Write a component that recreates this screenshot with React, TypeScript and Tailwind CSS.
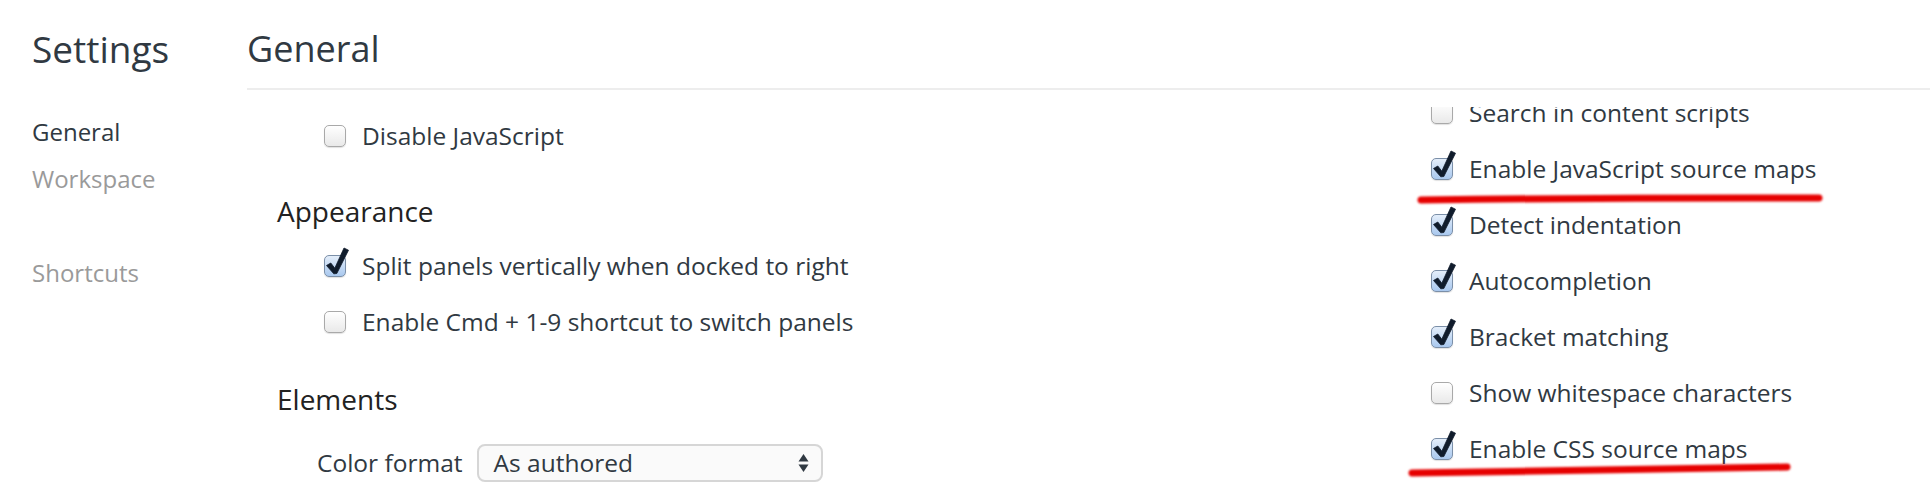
const leftSections = [
    {
        title: null as string | null,
        items: [{ label: "Disable JavaScript", checked: false }],
    },
    {
        title: "Appearance",
        items: [
            { label: "Split panels vertically when docked to right", checked: true },
            { label: "Enable Cmd + 1-9 shortcut to switch panels", checked: false },
        ],
    },
];

const sourcesItems = [
    { label: "Search in content scripts", checked: false },
    { label: "Enable JavaScript source maps", checked: true },
    { label: "Detect indentation", checked: true },
    { label: "Autocompletion", checked: true },
    { label: "Bracket matching", checked: true },
    { label: "Show whitespace characters", checked: false },
    { label: "Enable CSS source maps", checked: true },
];

function Checkbox({ checked }: { checked: boolean }) {
    if (!checked) {
        return (
            <span className="relative block h-[22px] w-[22px] shrink-0 rounded-[5px] border border-[#a9a9a9] bg-linear-to-b from-white to-[#e9e9e9] shadow-[0_1px_1px_rgba(0,0,0,0.12)]" />
        );
    }
    return (
        <span className="relative block h-[22px] w-[22px] shrink-0 rounded-[5px] border border-[#7b8fa8] bg-linear-to-b from-[#e4eefa] to-[#a9c8ee] shadow-[0_1px_1px_rgba(0,0,0,0.12)]">
            <svg
                className="absolute left-[-1px] top-[-1px] overflow-visible"
                width="22"
                height="22"
                viewBox="0 0 22 22"
            >
                <path
                    d="M2.5 10.5 L6.8 8 L10.8 13.2 L20 -7 L24.5 -4.8 L12.8 18.5 L9.8 18.8 Z"
                    fill="#101c2c"
                    strokeLinejoin="round"
                    stroke="#101c2c"
                    strokeWidth="0.8"
                />
            </svg>
        </span>
    );
}

function CheckRow({ label, checked }: { label: string; checked: boolean }) {
    return (
        <label className="flex h-[56px] items-center gap-4 pl-[77px] text-[24.5px] leading-[56px] whitespace-nowrap">
            <Checkbox checked={checked} />
            <span>{label}</span>
        </label>
    );
}

export default function App() {
    return (
        <div className="relative flex h-[498px] w-[1930px] overflow-hidden bg-white font-['Open_Sans',sans-serif] text-[#303942]">
            {/* Sidebar */}
            <aside className="w-[247px] shrink-0 pl-8">
                <h1 className="pt-[25px] text-[37px] leading-[48px]">Settings</h1>
                <nav className="mt-[35px] flex flex-col text-[24px] leading-[47px]">
                    <span>General</span>
                    <span className="text-[#9a9a9a]">Workspace</span>
                    <span className="h-[47px]" />
                    <span className="text-[#9a9a9a]">Shortcuts</span>
                </nav>
            </aside>

            {/* Main panel */}
            <main className="flex min-w-0 flex-1 flex-col">
                <header className="border-b-2 border-[#ededed] pt-[25px] pb-[15px]">
                    <h2 className="text-[36px] leading-[48px]">General</h2>
                </header>

                <div className="flex min-h-0 flex-1">
                    {/* Left column */}
                    <div className="w-[1107px] shrink-0 pt-[18px]">
                        {leftSections.map((section, i) => (
                            <section key={i} className={section.title ? "mt-[27px]" : ""}>
                                {section.title && (
                                    <h3 className="mb-[7px] pl-[30px] text-[28px] leading-[40px] text-[#222]">
                                        {section.title}
                                    </h3>
                                )}
                                {section.items.map((item) => (
                                    <CheckRow key={item.label} {...item} />
                                ))}
                            </section>
                        ))}

                        <section className="mt-[29px]">
                            <h3 className="pl-[30px] text-[28px] leading-[40px] text-[#222]">Elements</h3>
                            <div className="mt-[16px] flex h-[56px] items-center gap-[14px] pl-[70px] text-[24.5px] whitespace-nowrap">
                                <span>Color format</span>
                                <div className="flex h-[38px] w-[346px] items-center justify-between rounded-[8px] border-2 border-[#d6d6d6] bg-[#fafafa] pr-[12px] pl-[15px]">
                                    <span>As authored</span>
                                    <svg width="11" height="20" viewBox="0 0 11 20">
                                        <path d="M5.5 1 L10.5 8.5 L0.5 8.5 Z" fill="#303942" />
                                        <path d="M5.5 19 L10.5 11.5 L0.5 11.5 Z" fill="#303942" />
                                    </svg>
                                </div>
                            </div>
                        </section>
                    </div>

                    {/* Right column, scrolled */}
                    <div className="min-w-0 flex-1 pt-[17px]">
                        <div className="h-full overflow-hidden">
                            <div className="mt-[-22px]">
                                {sourcesItems.map((item) => (
                                    <CheckRow key={item.label} {...item} />
                                ))}
                            </div>
                        </div>
                    </div>
                </div>
            </main>

            {/* Red annotation strokes */}
            <svg
                className="pointer-events-none absolute inset-0"
                width="1930"
                height="498"
                viewBox="0 0 1930 498"
            >
                <defs>
                    <filter id="soft" x="-5%" y="-200%" width="110%" height="500%">
                        <feGaussianBlur stdDeviation="0.9" />
                    </filter>
                </defs>
                <g filter="url(#soft)" stroke="#e60000" strokeWidth="7" strokeLinecap="round" fill="none">
                    <path d="M1421 200 Q1620 197.5 1819 198" />
                    <path d="M1412 473 Q1600 470 1787 467" />
                </g>
            </svg>
        </div>
    );
}
